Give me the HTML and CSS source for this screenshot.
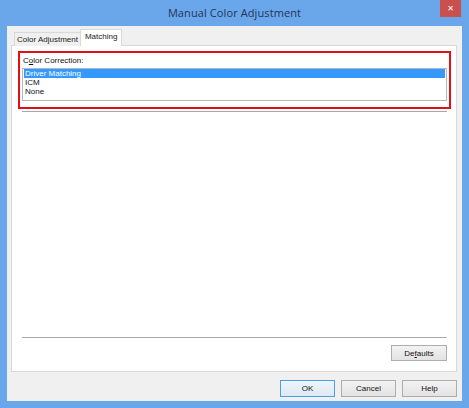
FILE: index.html
```html
<!DOCTYPE html>
<html>
<head>
<meta charset="utf-8">
<link rel="stylesheet" href="styles.css">
</head>
<body>
<div class="window">
  <div class="titlebar">
    <div class="tb-side"></div>
    <div class="title">Manual Color Adjustment</div>
    <div class="tb-side tb-right"><div class="close">&#x2715;</div></div>
  </div>
  <div class="client">
    <div class="tabs">
      <div class="tab">Color Adjustment</div>
      <div class="tab active">Matching</div>
    </div>
    <div class="panel">
      <div class="highlight">
        <div class="label">C<u>o</u>lor Correction:</div>
        <div class="listbox">
          <div class="item selected">Driver Matching</div>
          <div class="item">ICM</div>
          <div class="item">None</div>
        </div>
      </div>
      <div class="sep sep-top"></div>
      <div class="fill"></div>
      <div class="sep sep-bottom"></div>
      <div class="defaults-row"><button class="btn btn-defaults">De<u>f</u>aults</button></div>
    </div>
    <div class="actions">
      <button class="btn btn-default">OK</button>
      <button class="btn">Cancel</button>
      <button class="btn">Help</button>
    </div>
  </div>
</div>
</body>
</html>
```
FILE: styles.css
```css
* { box-sizing: border-box; }
html, body { margin: 0; padding: 0; }
body {
  width: 469px;
  height: 408px;
  overflow: hidden;
  font-family: "Liberation Sans", Arial, sans-serif;
  font-size: 8px;
  color: #111;
}
.window {
  width: 469px;
  height: 408px;
  background: #6aa7ea;
  display: flex;
  flex-direction: column;
}
.titlebar {
  height: 26px;
  display: grid;
  grid-template-columns: 1fr auto 1fr;
  align-items: start;
}
.title {
  font-family: "Open Sans", "Noto Sans", sans-serif;
  font-size: 11px;
  color: #1f3556;
  line-height: 26px;
  letter-spacing: 0.1px;
}
.tb-right {
  display: flex;
  justify-content: flex-end;
  padding-right: 8px;
}
.close {
  width: 21px;
  height: 17px;
  background: #c9504c;
  color: #fff;
  font-size: 8px;
  font-weight: bold;
  display: flex;
  align-items: center;
  justify-content: center;
  font-family: "DejaVu Sans", sans-serif;
}
.client {
  flex: 1;
  margin: 0 7px 7px 7px;
  background: #f0f0f0;
  padding: 3px 5px 4px 4px;
  display: flex;
  flex-direction: column;
}
.tabs {
  display: flex;
  align-items: flex-end;
  padding-left: 3px;
  height: 17px;
  position: relative;
  z-index: 1;
  margin-bottom: -1px;
}
.tab {
  height: 14px;
  padding: 0 2px;
  border: 1px solid #d9d9d9;
  border-bottom: none;
  background: #f0f0f0;
  line-height: 13px;
  color: #222;
}
.tab.active {
  height: 17px;
  background: #fff;
  padding: 0 4px;
  line-height: 14px;
  margin-left: -1px;
}
.panel {
  flex: 1;
  background: #fff;
  border: 1px solid #d9d9d9;
  display: flex;
  flex-direction: column;
  padding: 5px 5px 5px 6px;
}
.highlight {
  height: 58px;
  border: 2px solid #e30f16;
  padding: 2px 2px 0 2px;
}
.label {
  line-height: 12px;
  height: 13px;
  padding-left: 1px;
}
.listbox {
  height: 33px;
  border: 1px solid #b5b8c0;
  background: #fff;
  padding: 0 1px;
}
.item {
  height: 9px;
  line-height: 9px;
  padding-left: 1px;
}
.item.selected {
  background: #3399ff;
  color: #fff;
}
.sep {
  height: 2px;
  border-top: 1px solid #a8a8a8;
  border-bottom: 1px solid #fff;
  margin: 0 4px 0 4px;
}
.sep-top { margin-top: 2px; }
.fill { flex: 1; }
.defaults-row {
  display: flex;
  justify-content: flex-end;
  padding: 6px 4px 0 0;
  height: 27px;
}
.btn {
  font-family: "Liberation Sans", Arial, sans-serif;
  font-size: 8px;
  color: #111;
  height: 17px;
  width: 55px;
  padding: 0;
  border: 1px solid #adadad;
  background: linear-gradient(#f2f2f2, #e3e3e3);
  border-radius: 0;
}
.btn-defaults {
  width: 56px;
  height: 16px;
}
.btn-default {
  border-color: #4aa0e6;
  background: linear-gradient(#eef5fb, #dde9f3);
}
.actions {
  display: flex;
  justify-content: flex-end;
  gap: 6px;
  margin-top: 8px;
}
```
